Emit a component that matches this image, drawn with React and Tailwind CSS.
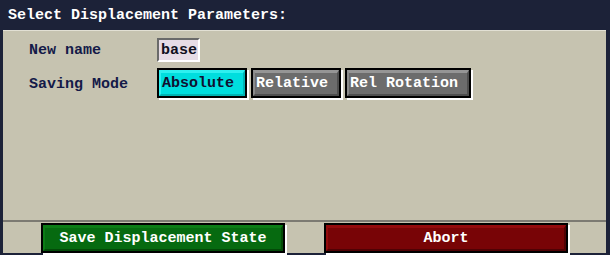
import React, { useState } from 'react';

const font = { fontFamily: '"Liberation Mono", "DejaVu Sans Mono", monospace' };

const ModeButton = ({ label, active, onClick, width }) => (
  <button
    onClick={onClick}
    className={`h-[30px] ${width} border-2 border-black shadow-[2px_2px_0_#ffffff] p-0`}
  >
    <div
      className={`h-full w-full flex items-center pl-[1px] text-[15px] font-bold leading-none border-t-[3px] border-l-[2px] border-r-[2px] border-b-[2px] ${
        active
          ? 'bg-[#00dede] text-[#101030] border-t-[#2ef0f0] border-l-[#2ef0f0] border-r-[#00b4b4] border-b-[#00b4b4]'
          : 'bg-[#6c6c6c] text-white border-t-[#959595] border-l-[#8a8a8a] border-r-[#4e4e4e] border-b-[#4e4e4e]'
      }`}
    >
      {label}
    </div>
  </button>
);

const ActionButton = ({ label, tone }) => {
  const colors =
    tone === 'green'
      ? 'bg-[#066a10] border-t-[#0c7c16] border-l-[#0c7c16] border-r-[#034a08] border-b-[#034a08]'
      : 'bg-[#780406] border-t-[#930a0c] border-l-[#930a0c] border-r-[#500204] border-b-[#500204]';
  return (
    <button className="w-[244px] h-[30px] border-2 border-black shadow-[2px_2px_0_#ffffff] p-0">
      <div
        className={`h-full w-full flex items-center justify-center text-white text-[15px] font-bold leading-none border-t-[3px] border-l-[2px] border-r-[2px] border-b-[2px] ${colors}`}
      >
        {label}
      </div>
    </button>
  );
};

export default function App() {
  const [mode, setMode] = useState('Absolute');

  return (
    <div className="w-[610px] h-[255px] bg-[#1c2238] flex flex-col overflow-hidden" style={font}>
      <div className="h-[30px] flex items-center pl-[8px] text-white text-[15px] font-bold leading-none">
        Select Displacement Parameters:
      </div>

      <div className="ml-[3px] mr-[4px] h-[223px] bg-[#c6c3b0] border-t border-t-[#e2e0d4] flex flex-col">
        {/* parameter rows */}
        <div className="h-[189px] pl-[26px] pt-[7px] flex flex-col gap-[6px] text-[#141a48] text-[15px] font-bold">
          <div className="flex items-center h-[24px]">
            <span className="w-[128px] leading-none">New name</span>
            <div className="h-[24px] w-[43px] bg-[#e6dce6] border-2 border-t-[#6a6a6a] border-l-[#6a6a6a] border-r-white border-b-white flex items-center pl-[2px] text-[#101020] leading-none">
              base
            </div>
          </div>
          <div className="flex items-center h-[32px]">
            <span className="w-[128px] leading-none">Saving Mode</span>
            <div className="flex gap-[4px] items-start h-[32px]">
              {[
                ['Absolute', 'w-[90px]'],
                ['Relative', 'w-[90px]'],
                ['Rel Rotation', 'w-[126px]'],
              ].map(([m, w]) => (
                <ModeButton key={m} label={m} width={w} active={mode === m} onClick={() => setMode(m)} />
              ))}
            </div>
          </div>
        </div>

        {/* footer */}
        <div className="border-t-2 border-t-[#7c7a72] flex-1 flex items-start pt-[1px] pl-[38px] gap-[39px]">
          <ActionButton label="Save Displacement State" tone="green" />
          <ActionButton label="Abort" tone="red" />
        </div>
      </div>
    </div>
  );
}
